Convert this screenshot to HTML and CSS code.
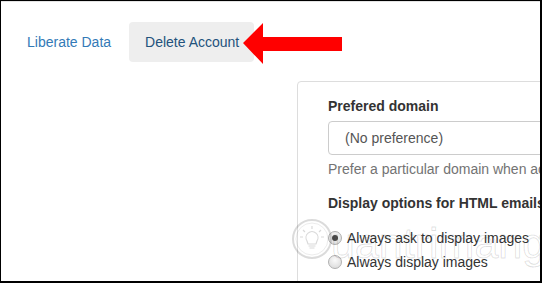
FILE: index.html
```html
<!DOCTYPE html>
<html>
<head>
<meta charset="utf-8">
<link rel="stylesheet" href="styles.css">
</head>
<body>
<div class="frame">
  <ul class="nav-pills">
    <li><a class="pill">Liberate Data</a></li>
    <li><a class="pill active">Delete Account</a></li>
  </ul>
  <svg class="arrow" width="100" height="42" viewBox="0 0 100 42">
    <polygon points="0,20 20,0 20,14 99,14 99,28 20,28 20,41" fill="#ff0000"/>
  </svg>
  <div class="panel">
    <div class="form-group">
      <div class="label">Prefered domain</div>
      <div class="select">(No preference)</div>
      <div class="help">Prefer a particular domain when accessing your mail</div>
    </div>
    <div class="form-group">
      <div class="label">Display options for HTML emails</div>
      <div class="radio-list">
        <div class="radio"><span class="dot checked"></span><span>Always ask to display images</span></div>
        <div class="radio"><span class="dot"></span><span>Always display images</span></div>
      </div>
    </div>
  </div>
  <div class="watermark">
    <svg class="wm-logo" width="44" height="44" viewBox="0 0 44 44">
      <circle cx="22" cy="22" r="19" fill="none" stroke="rgba(0,0,0,0.14)" stroke-width="2"/>
      <circle cx="22" cy="22" r="16" fill="none" stroke="rgba(0,0,0,0.08)" stroke-width="1"/>
      <path d="M17 24 a6 6 0 1 1 10 0 l-1 3 h-8 z" fill="none" stroke="rgba(0,0,0,0.15)" stroke-width="1.2"/>
      <path d="M18.5 29 h7 M19.5 31 h5" stroke="rgba(0,0,0,0.15)" stroke-width="1.2"/>
      <path d="M22 9 v3 M13 13 l2 2 M31 13 l-2 2 M10 20 h3 M34 20 h-3" stroke="rgba(0,0,0,0.15)" stroke-width="1.2"/>
    </svg>
    <span class="wm-text">uantrimang</span>
  </div>
</div>
</body>
</html>
```

FILE: styles.css
```css
* { box-sizing: border-box; }
html, body { margin: 0; padding: 0; background: #fff; }
body {
  font-family: "Liberation Sans", Arial, sans-serif;
  font-size: 14px;
  line-height: 20px;
  color: #333;
}
.frame {
  position: relative;
  width: 542px;
  height: 283px;
  border-top: 1px solid #000;
  border-left: 1px solid #000;
  border-right: 2px solid #000;
  border-bottom: 2px solid #000;
  overflow: hidden;
  box-shadow: inset 0 1px 0 #e4e4e4;
}
.nav-pills {
  list-style: none;
  margin: 0;
  padding: 21px 0 0 11px;
  display: flex;
  gap: 3px;
}
.pill {
  display: block;
  padding: 10px 15px;
  border-radius: 4px;
  color: #337ab7;
  text-decoration: none;
  cursor: pointer;
}
.pill.active {
  background: #eee;
  color: #23527c;
  padding: 10px 15px 10px 16px;
}
.arrow {
  position: absolute;
  left: 242px;
  top: 22px;
}
.panel {
  margin: 19px 0 0 296px;
  width: 400px;
  border: 1px solid #ddd;
  border-radius: 4px;
  padding: 14px 30px 20px 30px;
}
.label {
  font-weight: bold;
  margin-bottom: 5px;
}
.select {
  height: 34px;
  border: 1px solid #ccc;
  border-radius: 4px;
  padding: 6px 16px;
  color: #555;
  background: #fff;
  white-space: nowrap;
}
.help {
  margin-top: 4px;
  color: #737373;
  white-space: nowrap;
}
.form-group + .form-group { margin-top: 14px; }
.radio-list {
  margin-top: 15px;
  display: flex;
  flex-direction: column;
  gap: 4px;
}
.radio {
  display: flex;
  align-items: center;
  gap: 5px;
  padding-left: 0;
  white-space: nowrap;
}
.dot {
  width: 14px;
  height: 14px;
  border-radius: 50%;
  border: 1px solid #b0b0b0;
  background: radial-gradient(circle at 50% 35%, #fafafa, #d6d6d6);
  position: relative;
  flex: none;
}
.dot.checked::after {
  content: "";
  position: absolute;
  left: 3px;
  top: 3px;
  width: 6px;
  height: 6px;
  border-radius: 50%;
  background: #4a4a4a;
}
.watermark {
  position: absolute;
  left: 289px;
  top: 211px;
  display: flex;
  align-items: center;
  pointer-events: none;
}
.wm-text {
  font-family: "Liberation Sans", Arial, sans-serif;
  font-size: 43px;
  line-height: 46px;
  color: transparent;
  -webkit-text-stroke: 1px rgba(0,0,0,0.13);
  margin-left: -3px;
  margin-top: 8px;
}
```
